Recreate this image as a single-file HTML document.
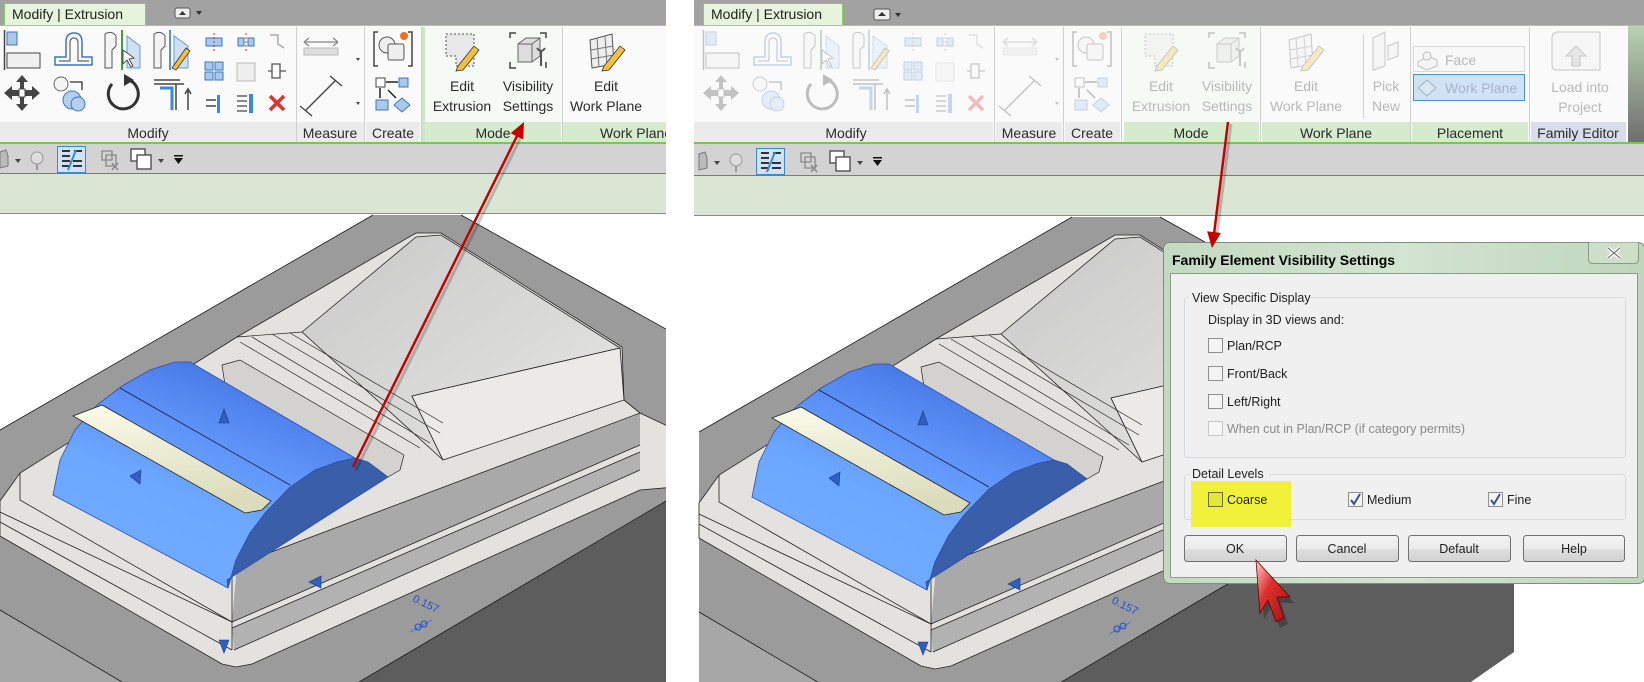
<!DOCTYPE html>
<html><head><meta charset="utf-8"><style>
html,body{margin:0;padding:0;background:#fff;}
svg{display:block;}
text{font-family:"Liberation Sans",sans-serif;}
</style></head><body>
<svg width="1644" height="682" viewBox="0 0 1644 682" xmlns="http://www.w3.org/2000/svg">
<defs>
<clipPath id="cL"><rect x="0" y="0" width="666" height="682"/></clipPath>
<clipPath id="vL"><rect x="0" y="214" width="666" height="468"/></clipPath>
<clipPath id="vR"><rect x="694" y="216" width="950" height="466"/></clipPath>
<linearGradient id="cyl" x1="0.75" y1="0" x2="0.25" y2="1">
<stop offset="0" stop-color="#3f6fe0"/><stop offset="0.35" stop-color="#5d92f7"/><stop offset="0.6" stop-color="#6ca8ff"/><stop offset="1" stop-color="#70acff"/></linearGradient>
<linearGradient id="boxg" x1="0" y1="0" x2="1" y2="1">
<stop offset="0" stop-color="#c9c9c9"/><stop offset="1" stop-color="#e6e6e4"/></linearGradient>
<linearGradient id="cream" x1="0" y1="0" x2="0.2" y2="1">
<stop offset="0" stop-color="#fbfbea"/><stop offset="1" stop-color="#dcdcbc"/></linearGradient>
<linearGradient id="dlg" x1="0" y1="0" x2="1" y2="0">
<stop offset="0" stop-color="#c3dac1"/><stop offset="0.5" stop-color="#d3e4d0"/><stop offset="1" stop-color="#bfd6bc"/></linearGradient>
<linearGradient id="btn" x1="0" y1="0" x2="0" y2="1">
<stop offset="0" stop-color="#f4f4f4"/><stop offset="0.5" stop-color="#ebebeb"/><stop offset="0.55" stop-color="#dedede"/><stop offset="1" stop-color="#d2d2d2"/></linearGradient>
<linearGradient id="cur" x1="0" y1="0" x2="1" y2="1">
<stop offset="0" stop-color="#ffd0d0"/><stop offset="0.4" stop-color="#e03030"/><stop offset="1" stop-color="#a01010"/></linearGradient>
<linearGradient id="edge" x1="0" y1="0" x2="0" y2="1">
<stop offset="0" stop-color="#b9d3b2"/><stop offset="1" stop-color="#6e6e6e"/></linearGradient>

<g id="model">
 <polygon points="0,430 373,215 461,215 815,412 359,682 0,682" fill="#9b9b9b"/>
 <polygon points="0,610 122,682 0,682" fill="#a7a7a7"/>
 <polygon points="359,682 815,413 815,650 769,682" fill="#5d5d5d"/>
 <g stroke="#1a1a1a" stroke-width="0.8" fill="none">
  <polyline points="0,430 373,215"/><polyline points="461,215 815,412"/><polyline points="359,682 815,413"/><polyline points="0,610 122,682"/>
 </g>
 <polygon points="0,501 20,473 237,337 416,233 441,233 622,347 624,400 640,413 760,470 760,480 640,490 252,664 236,667 222,664 0,536" fill="#e4e2de" stroke="#222" stroke-width="0.8"/>
 <polygon points="237,565 640,413 640,445 232,622" fill="#a9a9a9"/>
 <polygon points="232,628 640,452 640,470 234,650" fill="#b2b2b2"/>
 <g stroke="#222" stroke-width="0.8" fill="none">
  <polyline points="237,565 640,413"/><polyline points="232,622 640,445"/><polyline points="232,628 640,452"/><polyline points="234,650 640,470"/>
  <polyline points="0,512 232,622"/><polyline points="0,522 232,650"/><polyline points="237,565 232,570 232,650"/>
  <polyline points="20,473 20,500 232,622"/>
 </g>
 <polygon points="222,365 240,360 404,455 400,470 388,477 225,385" fill="#d4d2ce" stroke="#222" stroke-width="0.7"/>
 <polygon points="302,332 416,237 441,235 620,348 412,396 443,460" fill="url(#boxg)" stroke="#222" stroke-width="0.8"/>
 <polygon points="412,396 620,348 624,400 443,460" fill="#ebeae7" stroke="#222" stroke-width="0.8"/>
 <g stroke="#222" stroke-width="0.7" fill="none">
  <polyline points="237,337 302,332"/><polyline points="240,342 420,448"/><polyline points="252,337 430,443"/><polyline points="272,334 440,433"/><polyline points="290,333 443,423"/>
  <polyline points="624,400 640,413"/>
 </g>
 <polygon points="53,495 60,460 75,430 97,405 122,386 150,370 175,362 190,362 355,458 337,462 310,475 290,487 265,515 250,533 236,560 228,588" fill="url(#cyl)" stroke="#2a4fb0" stroke-width="0.8"/>
 <polygon points="228,588 236,560 250,533 265,513 290,487 315,470 337,462 355,458 368,462 388,477 227,580" fill="#3a5ea8" stroke="#2a4fb0" stroke-width="0.8"/>
 <line x1="120" y1="388" x2="290" y2="485" stroke="#1a1a3a" stroke-width="0.8"/>
 <polygon points="73,416 102,405 271,501 262,510 245,513" fill="url(#cream)" stroke="#222" stroke-width="0.8"/>
 <g fill="#2f5fc4" stroke="#1c3a80" stroke-width="0.6">
  <polygon points="224,409 219,423 229,423"/><polygon points="130,476 141,470 140,484"/>
  <polygon points="309,582 321,576 321,588"/><polygon points="219,640 229,640 224,653"/>
 </g>
 <line x1="410" y1="632" x2="432" y2="620" stroke="#4a7ae0" stroke-width="1"/>
 <circle cx="418" cy="627" r="3" fill="none" stroke="#2050c0" stroke-width="1"/>
 <circle cx="424" cy="624" r="3" fill="none" stroke="#2050c0" stroke-width="1"/>
</g>

<g id="icons">
 <line x1="4.5" y1="30" x2="4.5" y2="70" stroke="#444" stroke-width="1.5"/>
 <rect x="7" y="32" width="10" height="13" fill="#a9c9ec" stroke="#3a78c0"/>
 <rect x="7" y="53" width="33" height="15" fill="#f0f0f0" stroke="#444"/>
 <path d="M55 65 L55 57 L66 57 L66 42 Q66 33 74 33 Q82 33 82 42 L82 57 L92 57 L92 65 Z" fill="none" stroke="#3a78c0" stroke-width="1.5"/>
 <path d="M59 61 L70 61 L70 43 Q70 38 74 38 Q78 38 78 43 L78 61 L89 61" fill="none" stroke="#666" stroke-width="1.2"/>
 <path d="M105 68 L105 34 Q112 30 116 36 L116 46 L112 50 L112 68 Z" fill="#f4f4f4" stroke="#555"/>
 <line x1="122" y1="30" x2="122" y2="70" stroke="#3aa040" stroke-width="2"/>
 <path d="M127 68 L127 36 L140 46 L140 68 Z" fill="#cfe0f4" stroke="#6a9ad0"/>
 <path d="M123 50 L123 64 L127 60 L131 67 L133 66 L129 59 L134 58 Z" fill="#fff" stroke="#333" stroke-width="0.8"/>
 <path d="M154 68 L154 34 Q161 30 165 36 L165 46 L161 50 L161 68 Z" fill="#f4f4f4" stroke="#555"/>
 <line x1="170" y1="30" x2="170" y2="70" stroke="#5a90d0" stroke-width="2"/>
 <path d="M174 68 L174 36 L188 46 L188 68 Z" fill="#cfe0f4" stroke="#6a9ad0"/>
 <path d="M172 68 L186 48 L190 51 L176 70 Z" fill="#f2c040" stroke="#333" stroke-width="0.8"/>
 <path d="M22 75 L28 82 L24 82 L24 90 L32 90 L32 86 L40 93 L32 100 L32 96 L24 96 L24 104 L28 104 L22 111 L16 104 L20 104 L20 96 L12 96 L12 100 L4 93 L12 86 L12 90 L20 90 L20 82 L16 82 Z" fill="#444"/>
 <rect x="19" y="89" width="6" height="8" fill="#fff" stroke="#444"/>
 <circle cx="61" cy="84" r="7" fill="#f4f4f4" stroke="#666"/>
 <circle cx="72" cy="100" r="9" fill="#b4d0ee" stroke="#3a78c0"/>
 <circle cx="78" cy="104" r="7" fill="#b4d0ee" stroke="#3a78c0"/>
 <path d="M70 82 L82 82 L82 90" fill="none" stroke="#333" stroke-width="1.3"/>
 <path d="M129 80 A15 15 0 1 1 112 84" fill="none" stroke="#333" stroke-width="3"/>
 <polygon points="124,74 134,80 124,86" fill="#333"/>
 <path d="M154 80 L180 80 M154 84 L176 84 L176 110 M176 84 L184 84" fill="none" stroke="#444" stroke-width="1.5"/>
 <path d="M160 88 L172 88 L172 110" fill="none" stroke="#3a88e0" stroke-width="3"/>
 <path d="M188 110 L188 90 M185 94 L188 89 L191 94" fill="none" stroke="#444" stroke-width="1.5"/>
 <g stroke="#3a78c0" fill="#a9c9ec">
  <rect x="206" y="38" width="16" height="8"/><rect x="238" y="38" width="6" height="8"/><rect x="248" y="38" width="6" height="8"/>
  <rect x="205" y="62" width="8" height="8"/><rect x="215" y="62" width="8" height="8"/><rect x="205" y="72" width="8" height="8"/><rect x="215" y="72" width="8" height="8"/>
 </g>
 <line x1="214" y1="33" x2="214" y2="52" stroke="#d03030" stroke-dasharray="2,2"/>
 <line x1="246" y1="33" x2="246" y2="52" stroke="#d03030" stroke-dasharray="2,2"/>
 <rect x="237" y="63" width="18" height="18" fill="#eee" stroke="#bbb"/>
 <path d="M270 35 L278 35 L278 44 L284 48" fill="none" stroke="#aaa" stroke-width="1.5"/>
 <path d="M272 64 L280 64 L280 78 L272 78 Z M268 71 L272 71 M280 71 L286 71" fill="none" stroke="#555" stroke-width="1.3"/>
 <path d="M206 100 L216 100 M206 106 L216 106" stroke="#444" stroke-width="1.5"/>
 <rect x="217" y="95" width="3" height="18" fill="#3a88e0"/>
 <path d="M237 96 L247 96 M237 101 L247 101 M237 106 L247 106 M237 111 L247 111" stroke="#444" stroke-width="1.3"/>
 <rect x="249" y="94" width="4" height="19" fill="#3a88e0"/>
 <path d="M270 96 L284 110 M284 96 L270 110" stroke="#e03030" stroke-width="3.5"/>
 <path d="M304 42 L338 42 M304 42 L309 38 M304 42 L309 46 M338 42 L333 38 M338 42 L333 46" stroke="#888" stroke-width="1.3" fill="none"/>
 <rect x="304" y="48" width="34" height="7" fill="#ddd" stroke="#bbb"/>
 <path d="M356 58 L360 58 L358 61 Z M356 102 L360 102 L358 105 Z" fill="#444"/>
 <path d="M306 110 L336 80 M300 106 L312 116 M330 76 L342 86" stroke="#444" stroke-width="1.4" fill="none"/>
 <path d="M378 32 L374 32 L374 66 L378 66 M408 32 L412 32 L412 66 L408 66" stroke="#444" stroke-width="1.5" fill="none"/>
 <circle cx="387" cy="45" r="8" fill="#eee" stroke="#555"/>
 <rect x="388" y="44" width="16" height="16" rx="2" fill="#eee" stroke="#555"/>
 <circle cx="404" cy="36" r="4" fill="#f07020"/>
 <rect x="376" y="78" width="9" height="9" fill="#fff" stroke="#444"/>
 <rect x="399" y="78" width="9" height="9" fill="#a9c9ec" stroke="#3a78c0"/>
 <path d="M386 82 L398 82 M380 88 L380 98 M388 90 L396 98" stroke="#222" stroke-width="1.5"/>
 <rect x="376" y="100" width="12" height="10" fill="#a9c9ec" stroke="#3a78c0"/>
 <polygon points="402,98 410,105 402,112 394,105" fill="#a9c9ec" stroke="#3a78c0"/>
 <path d="M446 34 L474 34 L474 66 L456 66 L456 56 L446 56 Z" fill="#e8e8e8" stroke="#555" stroke-dasharray="2,2"/>
 <path d="M458 66 L474 46 L479 50 L463 70 L456 71 Z" fill="#f2c040" stroke="#333" stroke-width="0.8"/>
 <path d="M510 38 L510 33 L516 33 M540 33 L546 33 L546 38 M510 62 L510 68 L516 68 M546 62 L546 68" stroke="#444" stroke-width="1.5" fill="none"/>
 <path d="M518 44 L526 38 L540 38 L540 56 L532 62 L518 62 Z" fill="#ddd" stroke="#666"/>
 <path d="M518 44 L532 44 L532 62 M532 44 L540 38" stroke="#666" fill="none"/>
 <path d="M541 50 L541 66 M537 48 Q541 54 545 48" stroke="#555" stroke-width="2" fill="none"/>
 <path d="M590 40 L612 34 L614 64 L592 68 Z" fill="#eee" stroke="#555"/>
 <path d="M597 38 L599 67 M605 36 L607 66 M591 50 L613 46 M591 59 L614 55" stroke="#777" fill="none"/>
 <path d="M604 66 L620 46 L625 50 L609 70 L602 71 Z" fill="#f2c040" stroke="#333" stroke-width="0.8"/>
</g>

<g id="tb">
 <path d="M0 152 L6 150 L8 156 L8 166 L0 168 Z" fill="#bbb" stroke="#777"/>
 <path d="M15 159 L21 159 L18 163 Z" fill="#444"/>
 <circle cx="37" cy="158" r="6" fill="#ddd" stroke="#999"/>
 <path d="M37 164 L37 170" stroke="#999" stroke-width="2"/>
 <rect x="57.5" y="146.5" width="28" height="26" fill="#cfe2f6" stroke="#3f88d0"/>
 <path d="M62 151 L70 151 M62 156 L70 156 M62 161 L70 161 M62 166 L70 166 M74 151 L82 151 M73 161 L82 161 M73 166 L82 166" stroke="#333" stroke-width="2"/>
 <path d="M76 150 L68 170" stroke="#3a88e0" stroke-width="2"/>
 <path d="M102 151 L112 151 L112 160 L102 160 Z M106 155 L116 155 L116 166 L106 166 Z" fill="none" stroke="#888" stroke-width="1.3"/>
 <path d="M112 163 L118 170 M118 163 L112 170" stroke="#888" stroke-width="1.5"/>
 <rect x="131" y="149" width="14" height="12" fill="#fff" stroke="#444" stroke-width="1.3"/>
 <rect x="137" y="155" width="14" height="14" fill="#fff" stroke="#444" stroke-width="1.3"/>
 <path d="M158 159 L164 159 L161 163 Z" fill="#444"/>
 <rect x="174" y="155" width="9" height="1.5" fill="#111"/><path d="M174 158 L183 158 L178.5 164 Z" fill="#111"/>
</g>
</defs>

<g clip-path="url(#cL)">
 <rect x="0" y="0" width="666" height="25" fill="#a2a2a2"/>
 <rect x="4.5" y="3.5" width="141" height="22" fill="#e7f4dc" stroke="#86cc5a"/>
 <rect x="0" y="25" width="666" height="118" fill="#fafafa"/>
 <line x1="0" y1="25.5" x2="666" y2="25.5" stroke="#9ad27a"/>
 <rect x="425" y="27" width="136" height="95" fill="#f6faf4"/>
 <rect x="0" y="122" width="296" height="21" fill="#ebebeb"/>
 <rect x="297" y="122" width="67" height="21" fill="#ebebeb"/>
 <rect x="366" y="122" width="54" height="21" fill="#ebebeb"/>
 <rect x="425" y="122" width="136" height="21" fill="#d6ebcd"/>
 <rect x="563" y="122" width="103" height="21" fill="#d6ebcd"/>
 <g stroke="#cfcfcf"><line x1="296.5" y1="27" x2="296.5" y2="143"/><line x1="364.5" y1="27" x2="364.5" y2="143"/><line x1="421.5" y1="27" x2="421.5" y2="143"/><line x1="562.5" y1="27" x2="562.5" y2="143"/></g>
 <rect x="422" y="27" width="3" height="116" fill="#cfe6c4"/>
 <rect x="0" y="142" width="666" height="2" fill="#78c850"/>
 <rect x="0" y="144" width="666" height="29" fill="#d3d3d3"/>
 <line x1="0" y1="173.5" x2="666" y2="173.5" stroke="#7a7a7a"/>
 <rect x="0" y="174" width="666" height="39" fill="#dbe5d4"/>
 <line x1="0" y1="213.5" x2="666" y2="213.5" stroke="#8a8a8a"/>
 <use href="#icons"/>
 <use href="#tb"/>
 <rect x="175" y="8" width="15" height="10" rx="2" fill="#eee" stroke="#555"/><path d="M179 15 L182.5 11 L186 15 Z" fill="#333"/>
 <path d="M196 11 L202 11 L199 15 Z" fill="#333"/>
 <g clip-path="url(#vL)"><use href="#model"/></g>
 <g font-size="14" fill="#2a2a2a">
  <text x="12" y="19" font-size="14" fill="#1e1e1e">Modify | Extrusion</text>
  <text x="148" y="138" text-anchor="middle">Modify</text>
  <text x="330" y="138" text-anchor="middle">Measure</text>
  <text x="393" y="138" text-anchor="middle">Create</text>
  <text x="493" y="138" text-anchor="middle">Mode</text>
  <text x="600" y="138">Work Plane</text>
  <text x="462" y="91" text-anchor="middle">Edit</text>
  <text x="462" y="111" text-anchor="middle">Extrusion</text>
  <text x="528" y="91" text-anchor="middle">Visibility</text>
  <text x="528" y="111" text-anchor="middle">Settings</text>
  <text x="606" y="91" text-anchor="middle">Edit</text>
  <text x="606" y="111" text-anchor="middle">Work Plane</text>
 </g>
 <text x="0" y="0" font-size="11" fill="#2050d0" transform="translate(412,601) rotate(26)">0.157</text>
</g>

<rect x="694" y="0" width="950" height="25" fill="#a2a2a2"/>
<rect x="703.5" y="3.5" width="139" height="22" fill="#e7f4dc" stroke="#86cc5a"/>
<rect x="874" y="9" width="16" height="11" rx="2" fill="#eee" stroke="#555"/><path d="M878 16 L882 12 L886 16 Z" fill="#333"/>
<path d="M895 13 L901 13 L898 17 Z" fill="#333"/>
<rect x="694" y="25" width="936" height="118" fill="#fafafa"/>
<rect x="1628" y="25" width="16" height="118" fill="url(#edge)"/>
<line x1="694" y1="25.5" x2="1644" y2="25.5" stroke="#9ad27a"/>
<rect x="1124" y="27" width="135" height="95" fill="#f6faf4"/>
<rect x="694" y="122" width="299" height="21" fill="#ebebeb"/>
<rect x="996" y="122" width="66" height="21" fill="#ebebeb"/>
<rect x="1065" y="122" width="55" height="21" fill="#ebebeb"/>
<rect x="1124" y="122" width="135" height="21" fill="#d6ebcd"/>
<rect x="1262" y="122" width="148" height="21" fill="#d6ebcd"/>
<rect x="1412" y="122" width="116" height="21" fill="#d6ebcd"/>
<rect x="1531" y="122" width="95" height="21" fill="#d9dcea"/>
<g stroke="#cfcfcf"><line x1="994.5" y1="27" x2="994.5" y2="143"/><line x1="1063.5" y1="27" x2="1063.5" y2="143"/><line x1="1121.5" y1="27" x2="1121.5" y2="143"/><line x1="1260.5" y1="27" x2="1260.5" y2="143"/><line x1="1410.5" y1="27" x2="1410.5" y2="143"/><line x1="1529.5" y1="27" x2="1529.5" y2="143"/><line x1="1363.5" y1="35" x2="1363.5" y2="118"/></g>
<rect x="694" y="142" width="950" height="2" fill="#78c850"/>
<rect x="694" y="144" width="950" height="31" fill="#d3d3d3"/>
<line x1="694" y1="175.5" x2="1644" y2="175.5" stroke="#7a7a7a"/>
<rect x="694" y="176" width="950" height="39" fill="#dbe5d4"/>
<line x1="694" y1="215.5" x2="1644" y2="215.5" stroke="#8a8a8a"/>
<g opacity="0.3"><use href="#icons" transform="translate(699,0)"/></g>
<g transform="translate(699,2)"><use href="#tb"/></g>
<g opacity="0.3" stroke="#555" fill="#eee">
 <path d="M1373 38 L1385 32 L1385 66 L1373 70 Z"/><path d="M1388 46 L1398 42 L1398 56 L1388 60 Z"/>
 <path d="M1552 38 Q1552 32 1558 32 L1600 32 L1600 70 L1556 70 Q1552 70 1552 64 Z"/>
 <path d="M1576 46 L1586 56 L1580 56 L1580 66 L1572 66 L1572 56 L1566 56 Z" fill="#bbb"/>
</g>
<rect x="1413.5" y="46.5" width="111" height="25" fill="#f8f8f8" stroke="#d8d8d8"/>
<rect x="1413.5" y="74.5" width="111" height="26" fill="#cfe2f6" stroke="#4a90d8"/>
<g opacity="0.35" stroke="#555" fill="#eee"><path d="M1418 62 L1428 56 L1437 60 L1437 66 L1427 70 L1418 66 Z"/><circle cx="1427" cy="56" r="4"/><polygon points="1427,80 1436,88 1427,96 1418,88"/></g>
<g clip-path="url(#vR)"><use href="#model" transform="translate(699,2)"/></g>
<text x="0" y="0" font-size="11" fill="#2050d0" transform="translate(1111,603) rotate(26)">0.157</text>
<g font-size="14" fill="#2a2a2a">
 <text x="711" y="19" fill="#1e1e1e">Modify | Extrusion</text>
 <text x="846" y="138" text-anchor="middle">Modify</text>
 <text x="1029" y="138" text-anchor="middle">Measure</text>
 <text x="1092" y="138" text-anchor="middle">Create</text>
 <text x="1191" y="138" text-anchor="middle">Mode</text>
 <text x="1336" y="138" text-anchor="middle">Work Plane</text>
 <text x="1470" y="138" text-anchor="middle">Placement</text>
 <text x="1578" y="138" text-anchor="middle">Family Editor</text>
</g>
<g font-size="14" fill="#b8b8b8">
 <text x="1161" y="91" text-anchor="middle">Edit</text>
 <text x="1161" y="111" text-anchor="middle">Extrusion</text>
 <text x="1227" y="91" text-anchor="middle">Visibility</text>
 <text x="1227" y="111" text-anchor="middle">Settings</text>
 <text x="1306" y="91" text-anchor="middle">Edit</text>
 <text x="1306" y="111" text-anchor="middle">Work Plane</text>
 <text x="1386" y="91" text-anchor="middle">Pick</text>
 <text x="1386" y="111" text-anchor="middle">New</text>
 <text x="1580" y="92" text-anchor="middle">Load into</text>
 <text x="1580" y="112" text-anchor="middle">Project</text>
 <text x="1445" y="65">Face</text>
 <text x="1445" y="93" fill="#a8b4c2">Work Plane</text>
</g>

<rect x="1163.5" y="242.5" width="481" height="341" rx="6" fill="url(#dlg)" stroke="#7d8c7c"/>
<text x="1172" y="265" font-size="14" font-weight="bold" fill="#000">Family Element Visibility Settings</text>
<path d="M1588.5 242.5 L1588.5 259 Q1588.5 263.5 1593 263.5 L1634 263.5 Q1638.5 263.5 1638.5 259 L1638.5 242.5" fill="#cddfc9" stroke="#8a9a88"/>
<path d="M1608 248 L1620 258 M1620 248 L1608 258" stroke="#fff" stroke-width="4"/>
<path d="M1608 248 L1620 258 M1620 248 L1608 258" stroke="#777" stroke-width="1.2"/>
<rect x="1170.5" y="273.5" width="467" height="304" fill="#f0f0f0" stroke="#8c9c8a"/>
<rect x="1184.5" y="297.5" width="441" height="160" rx="3" fill="none" stroke="#d3dbe0"/>
<rect x="1189" y="290" width="122" height="14" fill="#f0f0f0"/>
<rect x="1184.5" y="474.5" width="441" height="45" rx="3" fill="none" stroke="#d3dbe0"/>
<rect x="1189" y="467" width="80" height="14" fill="#f0f0f0"/>
<rect x="1191" y="481" width="100" height="46" fill="#f1f13c"/>
<g font-size="12.5" fill="#1e1e1e">
 <text x="1192" y="302">View Specific Display</text>
 <text x="1208" y="324">Display in 3D views and:</text>
 <text x="1227" y="350">Plan/RCP</text>
 <text x="1227" y="378">Front/Back</text>
 <text x="1227" y="406">Left/Right</text>
 <text x="1227" y="433" fill="#8a8a8a">When cut in Plan/RCP (if category permits)</text>
 <text x="1192" y="478">Detail Levels</text>
 <text x="1227" y="504">Coarse</text>
 <text x="1367" y="504">Medium</text>
 <text x="1507" y="504">Fine</text>
</g>
<g fill="#f4f4f4" stroke="#8e8f8f">
 <rect x="1208.5" y="338.5" width="14" height="14"/>
 <rect x="1208.5" y="366.5" width="14" height="14"/>
 <rect x="1208.5" y="394.5" width="14" height="14"/>
 <rect x="1208.5" y="421.5" width="14" height="14" stroke="#c8c8c8" fill="#f6f6f6"/>
 <rect x="1208.5" y="492.5" width="14" height="14" fill="#e6e63a" stroke="#6f6f30"/>
 <rect x="1348.5" y="492.5" width="14" height="14"/>
 <rect x="1488.5" y="492.5" width="14" height="14"/>
</g>
<path d="M1351 500 L1354 504 L1360 494 M1491 500 L1494 504 L1500 494" stroke="#3a4f9a" stroke-width="2" fill="none"/>
<g stroke="#707070" fill="url(#btn)">
 <rect x="1184.5" y="535.5" width="102" height="26" rx="3"/>
 <rect x="1296.5" y="535.5" width="102" height="26" rx="3"/>
 <rect x="1408.5" y="535.5" width="102" height="26" rx="3"/>
 <rect x="1523.5" y="535.5" width="101" height="26" rx="3"/>
</g>
<g font-size="12.5" fill="#1e1e1e" text-anchor="middle">
 <text x="1235" y="553">OK</text><text x="1347" y="553">Cancel</text><text x="1459" y="553">Default</text><text x="1574" y="553">Help</text>
</g>

<line x1="356" y1="470" x2="521" y2="137" stroke="#000" stroke-opacity="0.2" stroke-width="3"/>
<line x1="353" y1="467" x2="519" y2="132" stroke="#c40000" stroke-width="2.5"/>
<polygon points="524,122 523.2,139.4 510.6,133.2" fill="#c40000"/>
<line x1="1231" y1="124" x2="1217" y2="234" stroke="#000" stroke-opacity="0.2" stroke-width="3"/>
<line x1="1228" y1="122" x2="1214" y2="234" stroke="#c40000" stroke-width="2.5"/>
<polygon points="1212,248 1220.9,233 1207.1,231.2" fill="#c40000"/>

<polygon points="1260,566 1264,619 1272,606 1280,628 1288,624 1281,603 1294,603" fill="#000" opacity="0.25"/>
<polygon points="1256,560 1260,613 1268,600 1276,622 1284,618 1277,597 1290,597" fill="url(#cur)" stroke="#600" stroke-width="0.8"/>
</svg>
</body></html>
